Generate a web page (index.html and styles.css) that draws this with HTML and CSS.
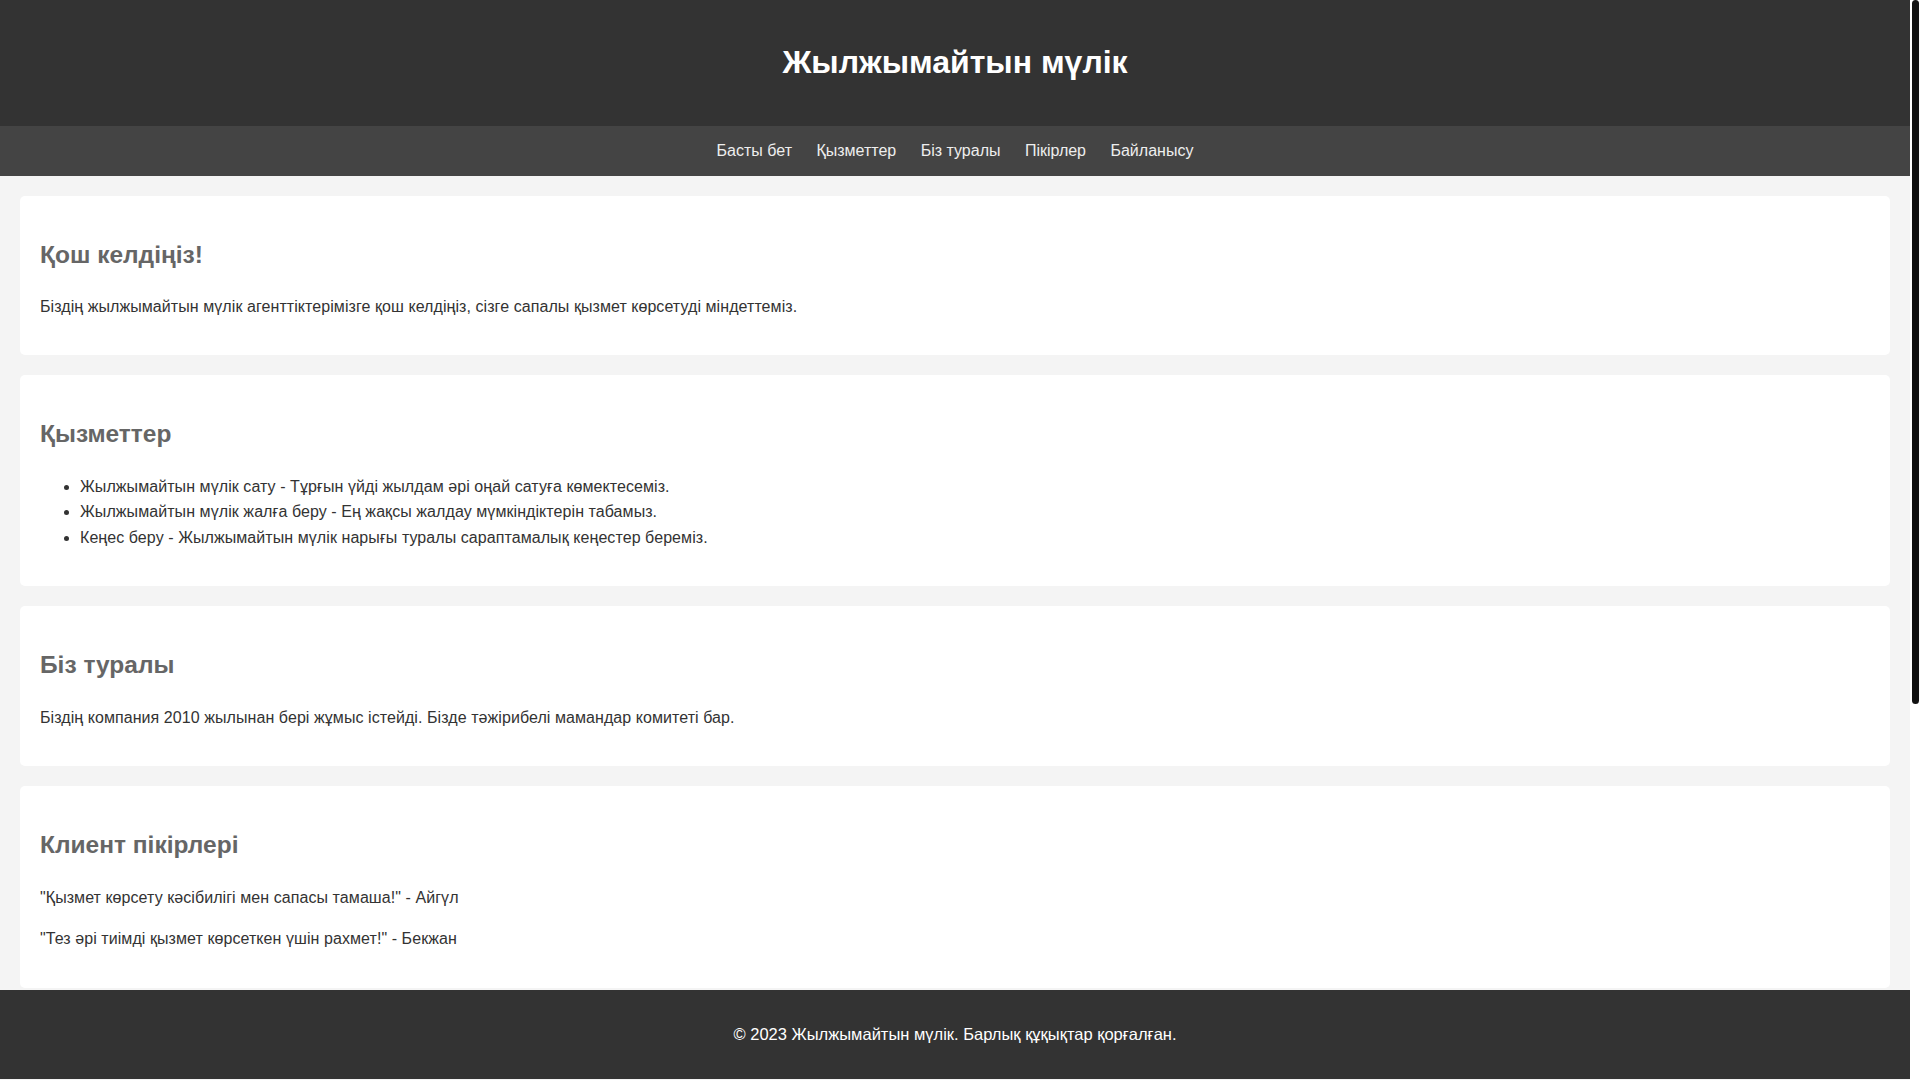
FILE: index.html
```html
<!DOCTYPE html>
<html lang="kk">
<head>
<meta charset="utf-8">
<title>Жылжымайтын мүлік</title>
<link rel="stylesheet" href="styles.css">
</head>
<body>
<header class="site-header">
  <h1 class="site-title">Жылжымайтын мүлік</h1>
</header>
<nav class="site-nav">
  <a href="#home">Басты бет</a>
  <a href="#services">Қызметтер</a>
  <a href="#about">Біз туралы</a>
  <a href="#reviews">Пікірлер</a>
  <a href="#contact">Байланысу</a>
</nav>
<main class="content">
  <section class="card" id="home">
    <h2>Қош келдіңіз!</h2>
    <p>Біздің жылжымайтын мүлік агенттіктерімізге қош келдіңіз, сізге сапалы қызмет көрсетуді міндеттеміз.</p>
  </section>
  <section class="card" id="services">
    <h2>Қызметтер</h2>
    <ul>
      <li>Жылжымайтын мүлік сату - Тұрғын үйді жылдам әрі оңай сатуға көмектесеміз.</li>
      <li>Жылжымайтын мүлік жалға беру - Ең жақсы жалдау мүмкіндіктерін табамыз.</li>
      <li>Кеңес беру - Жылжымайтын мүлік нарығы туралы сараптамалық кеңестер береміз.</li>
    </ul>
  </section>
  <section class="card" id="about">
    <h2>Біз туралы</h2>
    <p>Біздің компания 2010 жылынан бері жұмыс істейді. Бізде тәжірибелі мамандар комитеті бар.</p>
  </section>
  <section class="card" id="reviews">
    <h2>Клиент пікірлері</h2>
    <p>"Қызмет көрсету кәсібилігі мен сапасы тамаша!" - Айгүл</p>
    <p>"Тез әрі тиімді қызмет көрсеткен үшін рахмет!" - Бекжан</p>
  </section>
</main>
<footer class="site-footer">
  <p>© 2023 Жылжымайтын мүлік. Барлық құқықтар қорғалған.</p>
</footer>
<div class="scrollbar" aria-hidden="true"><div class="scrollbar-thumb"></div></div>
</body>
</html>
```

FILE: styles.css
```css
html {
  background: #f4f4f4;
  scrollbar-width: none;
}
::-webkit-scrollbar {
  display: none;
}
body {
  margin: 0 10px 0 0;
  font-family: "Liberation Sans", Arial, sans-serif;
  font-size: 16px;
  line-height: 1.6;
  color: #333;
  background: #f4f4f4;
}
.site-header {
  background: #333;
  color: #fff;
  padding: 16px 0;
  text-align: center;
}
.site-title {
  font-size: 32px;
  margin: 21.44px 0;
}
.site-nav {
  background: #444;
  padding: 12px 0;
  text-align: center;
}
.site-nav a {
  color: #eee;
  text-decoration: none;
  margin: 0 10px;
}
.content {
  padding: 20px 20px 2px;
  display: flex;
  flex-direction: column;
  gap: 20px;
}
.card {
  background: #fff;
  padding: 20px;
  border-radius: 5px;
}
.card h2 {
  color: #666;
  font-size: 24.5px;
  line-height: 38.4px;
  margin: 19.92px 0;
}
.card p,
.card li {
  letter-spacing: 0.07px;
}
.card p {
  margin: 16px 0;
}
.card ul {
  margin: 16px 0;
  padding-left: 40px;
}
.site-footer {
  background: #333;
  color: #fff;
  text-align: center;
  padding: 16px 0;
}
.site-footer p {
  margin: 16px 0;
  font-size: 16.5px;
  line-height: 25.6px;
}
.scrollbar {
  position: fixed;
  top: 0;
  right: 0;
  width: 10px;
  height: 100vh;
  background: #fff;
}
.scrollbar-thumb {
  margin-left: 2px;
  width: 7px;
  height: 704px;
  background: #111;
  border-radius: 4px;
}
```
